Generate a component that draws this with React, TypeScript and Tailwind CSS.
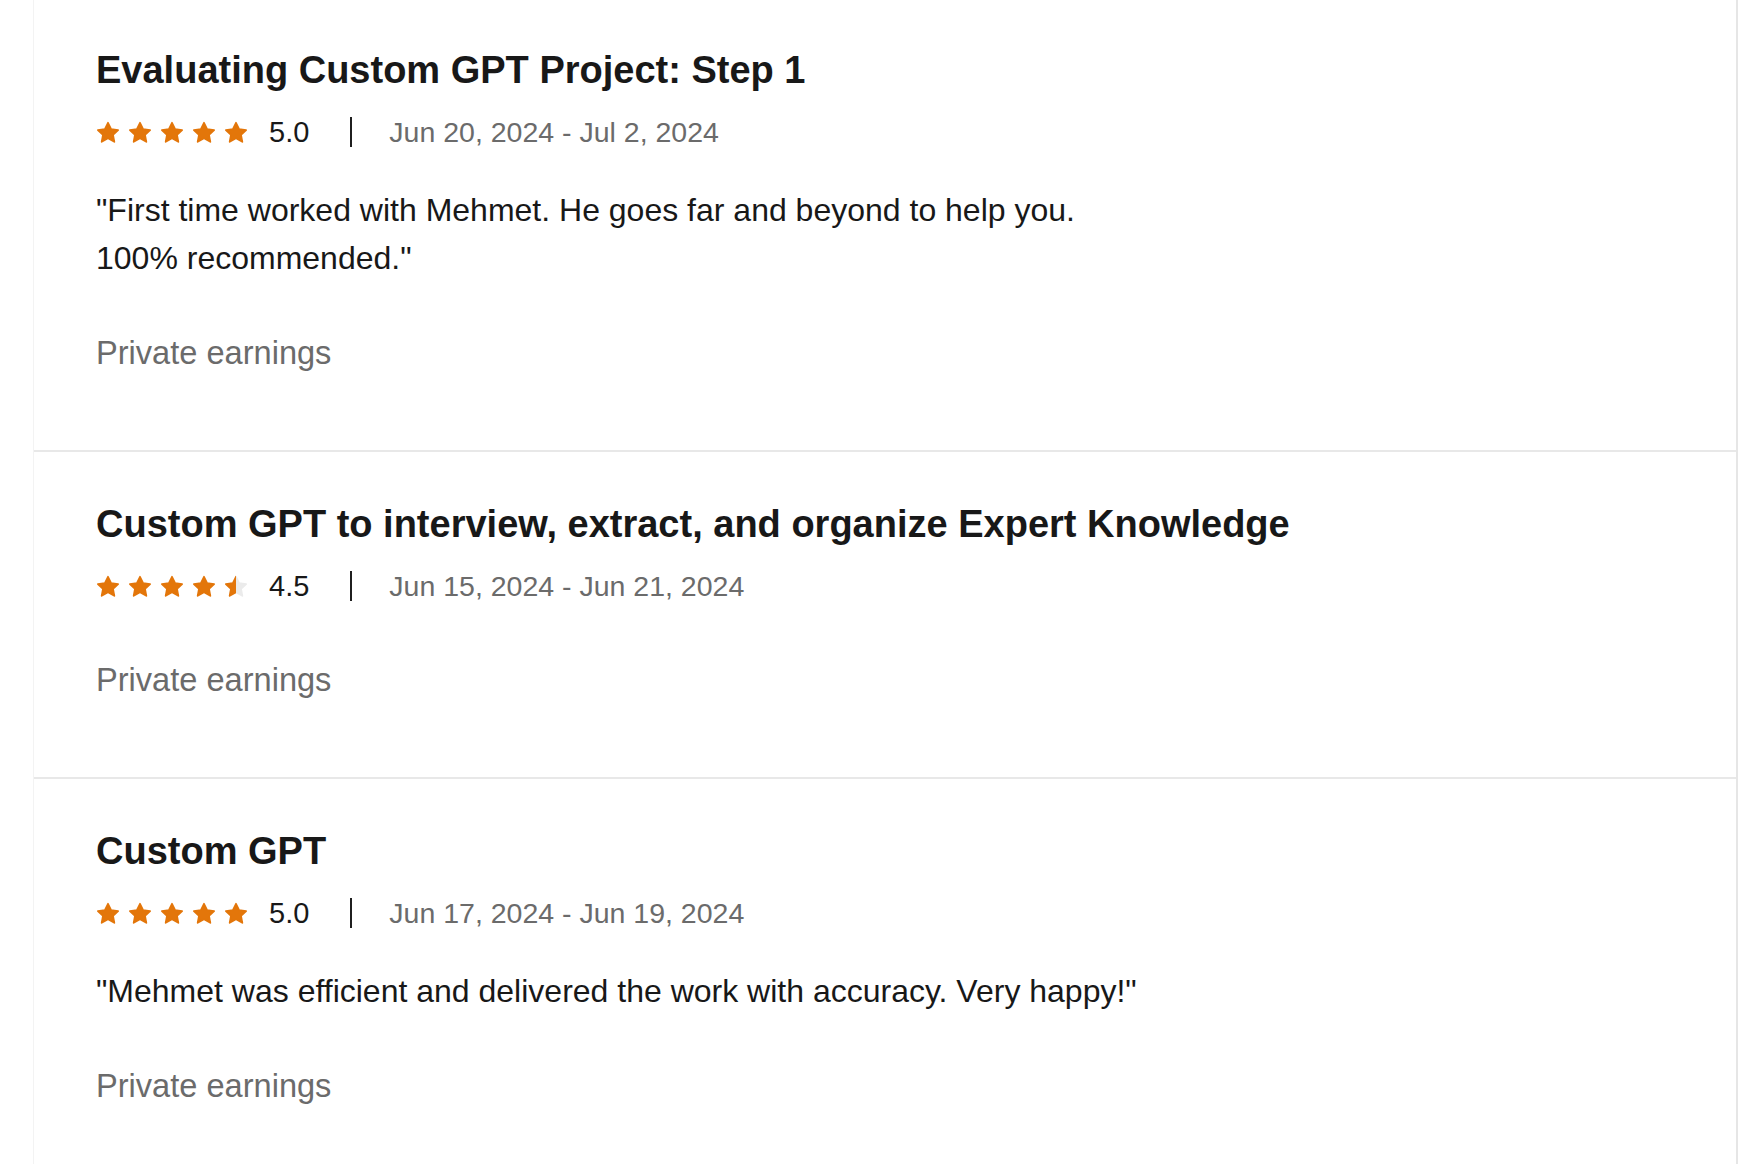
import React from "react";

type Review = {
  title: string;
  rating: number;
  dates: string;
  quote?: string[];
};

const reviews: Review[] = [
  {
    title: "Evaluating Custom GPT Project: Step 1",
    rating: 5,
    dates: "Jun 20, 2024 - Jul 2, 2024",
    quote: [
      "\"First time worked with Mehmet. He goes far and beyond to help you.",
      "100% recommended.\"",
    ],
  },
  {
    title: "Custom GPT to interview, extract, and organize Expert Knowledge",
    rating: 4.5,
    dates: "Jun 15, 2024 - Jun 21, 2024",
  },
  {
    title: "Custom GPT",
    rating: 5,
    dates: "Jun 17, 2024 - Jun 19, 2024",
    quote: ["\"Mehmet was efficient and delivered the work with accuracy. Very happy!\""],
  },
];

const STAR =
  "M12 1.8l3.1 6.4 7 .9-5.1 4.8 1.3 6.9L12 17.3l-6.3 3.5 1.3-6.9-5.1-4.8 7-.9z";

function Star({ fill, id }: { fill: "full" | "half"; id: string }) {
  return (
    <svg viewBox="0 0 24 22" className="w-[24px] h-[22px] block">
      {fill === "half" && (
        <defs>
          <clipPath id={id}>
            <rect x="0" y="0" width="12" height="24" />
          </clipPath>
        </defs>
      )}
      {fill === "half" && (
        <path d={STAR} fill="#ebebeb" stroke="#ebebeb" strokeWidth="1.8" strokeLinejoin="round" />
      )}
      <path
        d={STAR}
        fill="#e3760a"
        stroke="#e3760a"
        strokeWidth="1.8"
        strokeLinejoin="round"
        clipPath={fill === "half" ? `url(#${id})` : undefined}
      />
    </svg>
  );
}

function Stars({ rating, idx }: { rating: number; idx: number }) {
  const items = [0, 1, 2, 3, 4].map((i) => (rating >= i + 1 ? "full" : "half"));
  return (
    <div className="flex items-center gap-[8px]">
      {items.map((f, i) => (
        <Star key={i} fill={f as "full" | "half"} id={`half-${idx}-${i}`} />
      ))}
    </div>
  );
}

export default function App() {
  return (
    <div
      className="w-full min-h-[1164px] bg-white"
      style={{ fontFamily: '"Liberation Sans", Arial, sans-serif' }}
    >
      <div className="ml-[33px] w-[1705px] min-h-[1164px] bg-white border-l border-l-[#f3f3f3] border-r-2 border-r-[#e6e6e6]">
        {reviews.map((r, i) => (
          <section
            key={i}
            className={`pl-[62px] pb-[73px] ${i === 0 ? "pt-[48px]" : "pt-[50px]"} ${
              i < reviews.length - 1 ? "border-b-2 border-b-[#e8e8e8]" : ""
            }`}
          >
            <h2 className="text-[38px] leading-[44px] font-bold text-[#181818]">
              {r.title}
            </h2>
            <div className="mt-[24px] flex items-center h-[32px]">
              <Stars rating={r.rating} idx={i} />
              <span className="ml-[21px] text-[29px] leading-[32px] text-[#181818]">
                {r.rating.toFixed(1)}
              </span>
              <span className="ml-[41px] w-[2px] h-[30px] bg-[#1f1f1f]" />
              <span className="ml-[37px] text-[28.5px] leading-[32px] text-[#6b6b6b]">
                {r.dates}
              </span>
            </div>
            {r.quote && (
              <div className="mt-[38px] text-[32px] leading-[48px] text-[#181818]">
                {r.quote.map((l, j) => (
                  <div key={j}>{l}</div>
                ))}
              </div>
            )}
            <div
              className={`${
                r.quote ? "mt-[47px]" : "mt-[54px]"
              } text-[32.6px] leading-[48px] text-[#6b6b6b]`}
            >
              Private earnings
            </div>
          </section>
        ))}
      </div>
    </div>
  );
}
